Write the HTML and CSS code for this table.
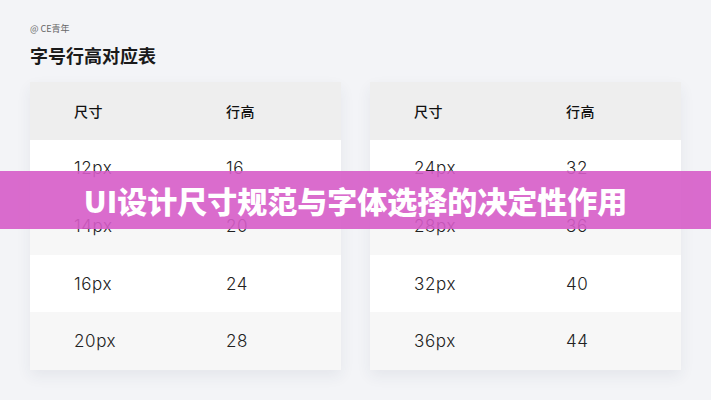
FILE: index.html
```html
<!DOCTYPE html>
<html lang="zh">
<head>
<meta charset="utf-8">
<link rel="stylesheet" href="styles.css">
</head>
<body>
<div class="page">
  <div class="brand">@ CE青年</div>
  <h1 class="title">字号行高对应表</h1>
  <div class="tables">
    <div class="table">
      <div class="row head"><span>尺寸</span><span>行高</span></div>
      <div class="row"><span>12px</span><span>16</span></div>
      <div class="row alt"><span>14px</span><span>20</span></div>
      <div class="row"><span>16px</span><span>24</span></div>
      <div class="row alt"><span>20px</span><span>28</span></div>
    </div>
    <div class="table">
      <div class="row head"><span>尺寸</span><span>行高</span></div>
      <div class="row"><span>24px</span><span>32</span></div>
      <div class="row alt"><span>28px</span><span>36</span></div>
      <div class="row"><span>32px</span><span>40</span></div>
      <div class="row alt"><span>36px</span><span>44</span></div>
    </div>
  </div>
  <div class="banner">UI设计尺寸规范与字体选择的决定性作用</div>
</div>
</body>
</html>
```

FILE: styles.css
```css
html, body {
  margin: 0;
  padding: 0;
}
body {
  width: 711px;
  height: 400px;
  overflow: hidden;
  background: #f3f4f7;
  font-family: "Noto Sans CJK SC", "Noto Sans", sans-serif;
}
.page {
  position: relative;
  height: 400px;
  padding: 23px 30px 0 30px;
  box-sizing: border-box;
}
.brand {
  font-size: 9px;
  line-height: 12px;
  color: #666;
  height: 12px;
}
.title {
  margin: 7px 0 0 0;
  font-size: 18px;
  line-height: 26px;
  font-weight: 700;
  color: #1a1a1a;
}
.tables {
  margin-top: 14px;
  display: flex;
  gap: 29px;
}
.table {
  width: 311px;
  background: #fff;
  box-shadow: 0 6px 14px rgba(40, 50, 80, 0.07);
}
.row {
  display: grid;
  grid-template-columns: 152px 1fr;
  align-items: center;
  height: 57.6px;
  padding-left: 44px;
  font-family: "Inter", "Liberation Sans", "Noto Sans CJK SC", sans-serif;
  font-size: 17px;
  font-weight: 300;
  letter-spacing: 0.6px;
  color: #222;
  background: #ffffff;
}
.row.alt {
  background: #f7f7f7;
}
.row.head {
  background: #eeeeee;
  font-family: "Noto Sans CJK SC", sans-serif;
  font-size: 14px;
  font-weight: 500;
  letter-spacing: 0.5px;
  color: #111;
}
.banner {
  position: absolute;
  left: 0;
  right: 0;
  top: 171px;
  height: 58px;
  display: flex;
  align-items: center;
  justify-content: center;
  background: rgba(214, 92, 200, 0.9);
  color: #fff;
  font-size: 30px;
  font-weight: 900;
}
```
